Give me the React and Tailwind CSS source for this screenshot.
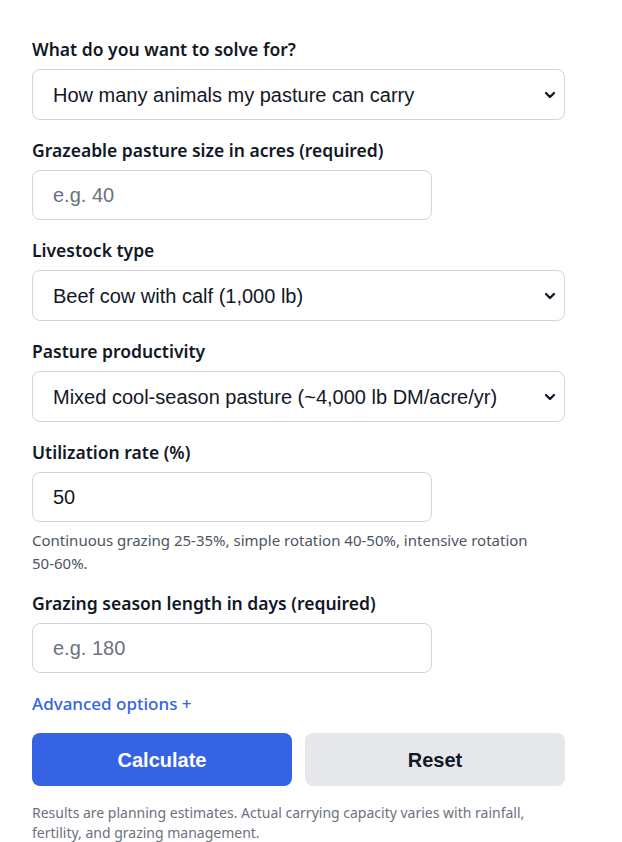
import { ChevronDown } from 'lucide-react';

const labelCls = "block mb-2 text-[17.5px] leading-6 font-semibold text-[#111827] font-['Noto_Sans',sans-serif]";
const controlCls = "h-[51px] w-full rounded-lg border border-[#d1d5db] bg-white px-5 text-xl text-[#111827] font-['Liberation_Sans',Arial,sans-serif] outline-none placeholder:text-[#6b7280]";

function SelectField({ label, value, options }) {
    return (
        <div>
            <label className={labelCls}>{label}</label>
            <div className="relative">
                <select defaultValue={value} className={controlCls + " appearance-none pr-10"}>
                    {options.map((o) => (
                        <option key={o}>{o}</option>
                    ))}
                </select>
                <ChevronDown className="pointer-events-none absolute right-[7px] top-1/2 h-4 w-4 -translate-y-1/2 text-[#111827]" strokeWidth={3.5} />
            </div>
        </div>
    );
}

function InputField({ label, placeholder, value, children }) {
    return (
        <div>
            <label className={labelCls}>{label}</label>
            <input
                type="text"
                placeholder={placeholder}
                defaultValue={value}
                className={controlCls + " !h-[50px] !w-[400px] px-4"}
            />
            {children}
        </div>
    );
}

export default function App() {
    return (
        <div className="min-h-screen bg-white">
            <div className="w-[533px] ml-8 pt-[37px] pb-4 flex flex-col gap-[18px]">
                <SelectField
                    label="What do you want to solve for?"
                    value="How many animals my pasture can carry"
                    options={["How many animals my pasture can carry", "How many acres I need"]}
                />
                <InputField label="Grazeable pasture size in acres (required)" placeholder="e.g. 40" />
                <SelectField
                    label="Livestock type"
                    value="Beef cow with calf (1,000 lb)"
                    options={["Beef cow with calf (1,000 lb)", "Dry beef cow (1,200 lb)", "Ewe with lamb"]}
                />
                <SelectField
                    label="Pasture productivity"
                    value="Mixed cool-season pasture (~4,000 lb DM/acre/yr)"
                    options={["Mixed cool-season pasture (~4,000 lb DM/acre/yr)", "Native range"]}
                />
                <InputField label="Utilization rate (%)" value="50">
                    <p className="mt-[7px] text-[15px] leading-[23px] text-[#4b5563] font-['Noto_Sans',sans-serif]">
                        Continuous grazing 25-35%, simple rotation 40-50%, intensive rotation{' '}
                        <span className="whitespace-nowrap">50-60%.</span>
                    </p>
                </InputField>
                <div className="-mt-0.5">
                    <InputField label="Grazing season length in days (required)" placeholder="e.g. 180" />
                </div>
                <div className="mt-px">
                    <button type="button" className="text-[17px] leading-6 font-medium text-[#3563e3] font-['Noto_Sans',sans-serif]">
                        Advanced options +
                    </button>
                </div>
                <div className="-mt-px grid grid-cols-2 gap-[13px]">
                    <button type="button" className="h-[53px] rounded-lg bg-[#3563e3] text-xl font-bold text-white font-['Liberation_Sans',Arial,sans-serif]">
                        Calculate
                    </button>
                    <button type="button" className="h-[53px] rounded-lg bg-[#e5e7eb] text-xl font-bold text-[#111827] font-['Liberation_Sans',Arial,sans-serif]">
                        Reset
                    </button>
                </div>
                <p className="-mt-px text-sm leading-5 text-[#6b7280] font-['Noto_Sans',sans-serif]">
                    Results are planning estimates. Actual carrying capacity varies with rainfall, fertility, and grazing management.
                </p>
            </div>
        </div>
    );
}
